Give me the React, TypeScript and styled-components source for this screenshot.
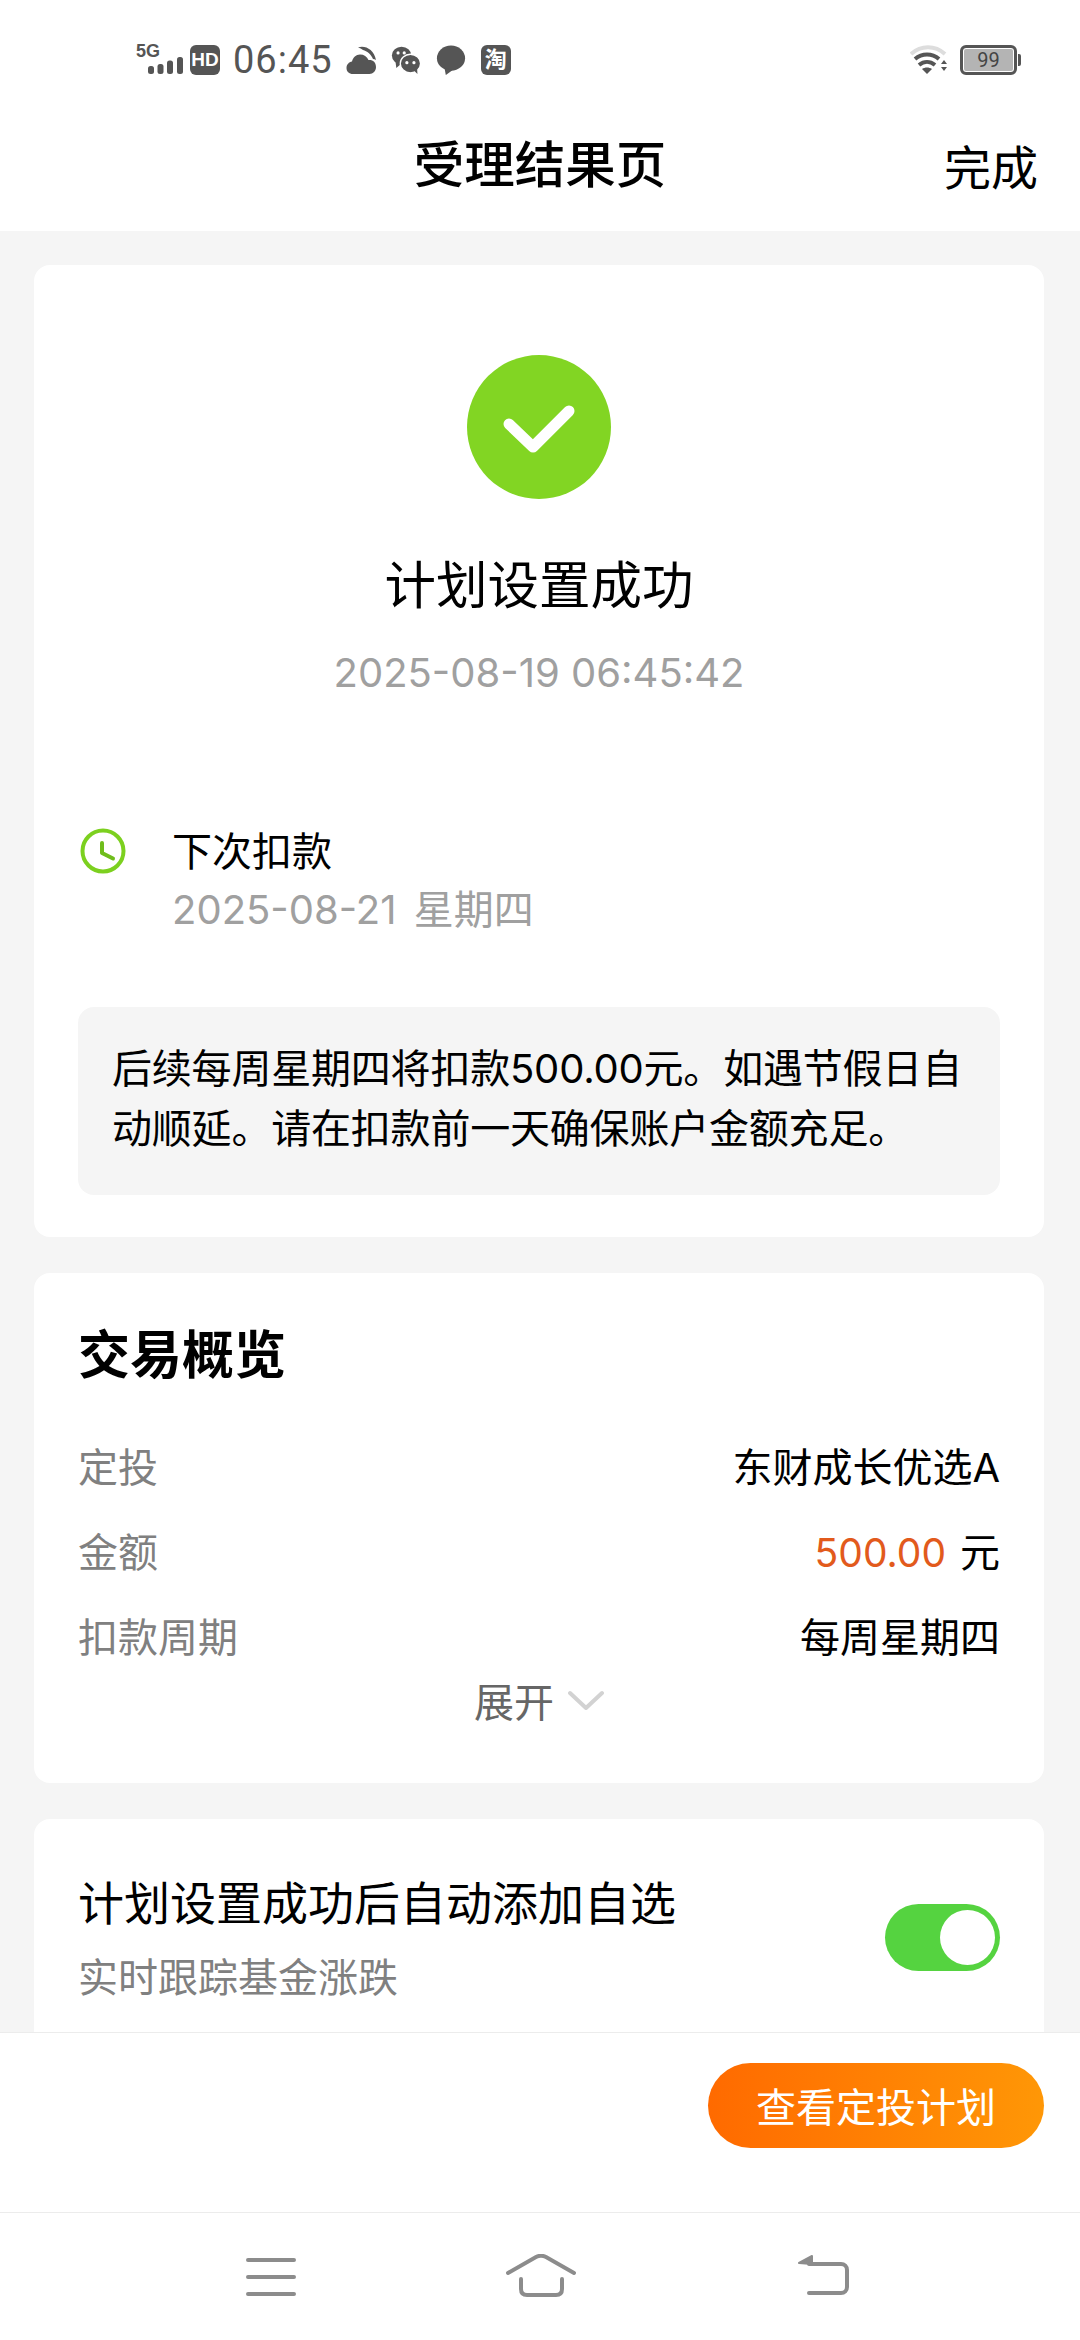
import styled, { createGlobalStyle } from 'styled-components';

const GlobalStyle = createGlobalStyle`
  html, body {
    margin: 0;
    padding: 0;
    background: #fff;
    font-family: Inter, "Noto Sans CJK SC", sans-serif;
  }
  * { box-sizing: border-box; }
`;

const Page = styled.div`
  width: 1080px;
  height: 2340px;
  display: flex;
  flex-direction: column;
  overflow: hidden;
  background: #f5f5f5;
`;

const StatusBar = styled.div`
  height: 102px;
  flex: none;
  background: #fff;
  padding: 45px 0 0 136px;
  display: flex;
  align-items: flex-start;
  color: #555;
`;

const StatusIcon = styled.svg<{ $gap?: number }>`
  display: block;
  flex: none;
  margin-right: ${(p) => p.$gap ?? 0}px;
`;

const SignalWrap = styled.div`
  width: 48px;
  height: 30px;
  position: relative;
  margin-right: 6px;
`;

const FiveG = styled.span`
  position: absolute;
  left: 0;
  top: -3px;
  font: 700 18px/18px "Liberation Sans", sans-serif;
  color: #555;
`;

const Glyph = styled.span<{ $size: number }>`
  width: 30px;
  height: 30px;
  border-radius: 6px;
  background: #555;
  color: #fff;
  display: flex;
  align-items: center;
  justify-content: center;
  font: 700 ${(p) => p.$size}px/30px "Liberation Sans", "Noto Sans CJK SC", sans-serif;
  flex: none;
`;

const Clock = styled.span`
  font: 400 38px/30px Roboto, sans-serif;
  letter-spacing: 1px;
  margin: 0 13px 0 13px;
  color: #555;
`;

const StatusRight = styled.div`
  margin-left: auto;
  margin-right: 63px;
  display: flex;
  align-items: center;
  gap: 12px;
`;

const Battery = styled.div`
  width: 57px;
  height: 30px;
  border: 3px solid #555;
  border-radius: 6px;
  background: #b4b4b4;
  box-shadow: inset 0 0 0 1px #fff;
  font: 400 20px/24px Roboto, sans-serif;
  color: #444;
  text-align: center;
  position: relative;
  &::after {
    content: '';
    position: absolute;
    right: -7px;
    top: 6px;
    width: 3px;
    height: 12px;
    background: #555;
    border-radius: 0 2px 2px 0;
  }
`;

const Header = styled.header`
  height: 129px;
  flex: none;
  background: #fff;
  position: relative;
  display: flex;
  align-items: center;
  justify-content: center;
  padding-bottom: 12px;
`;

const Title = styled.h1`
  margin: 0;
  font: 500 50.5px/64px "Noto Sans CJK SC", sans-serif;
  color: #000;
`;

const Done = styled.span`
  position: absolute;
  right: 42px;
  top: 31px;
  font: 400 47px/64px "Noto Sans CJK SC", sans-serif;
  color: #000;
`;

const Scroll = styled.main`
  flex: 1;
  min-height: 0;
  overflow: hidden;
  padding: 34px 36px 0 34px;
  display: flex;
  flex-direction: column;
  gap: 36px;
`;

const Card = styled.section`
  flex: none;
  background: #fff;
  border-radius: 16px;
`;

const ResultCard = styled(Card)`
  height: 972px;
  padding: 90px 44px 0;
`;

const Success = styled.div`
  display: flex;
  flex-direction: column;
  align-items: center;
`;

const ResultTitle = styled.h2`
  margin: 50px 0 0;
  font: 400 51.5px/66px "Noto Sans CJK SC", sans-serif;
  color: #000;
`;

const ResultTime = styled.div`
  margin-top: 32px;
  font: 400 40px/52px Inter, sans-serif;
  color: #a0a0a0;
`;

const NextRow = styled.div`
  margin-top: 122px;
  display: flex;
  align-items: flex-start;
  gap: 46px;
`;

const ClockIcon = styled.svg`
  flex: none;
  margin: 7px 0 0 2px;
`;

const NextTitle = styled.div`
  font: 400 40px/56px "Noto Sans CJK SC", sans-serif;
  color: #000;
`;

const NextDate = styled.div`
  margin-top: 5px;
  font: 400 40px/56px Inter, "Noto Sans CJK SC", sans-serif;
  word-spacing: 6px;
  color: #a0a0a0;
`;

const Notice = styled.div`
  margin-top: 69px;
  height: 188px;
  border-radius: 16px;
  background: #f5f5f5;
  padding: 32px 30px 0 34px;
  font: 400 40px/60px Inter, "Noto Sans CJK SC", sans-serif;
  letter-spacing: -0.2px;
  color: #000;
`;

const SummaryCard = styled(Card)`
  height: 510px;
  padding: 46px 44px 0;
`;

const SectionTitle = styled.h3`
  margin: 0 0 40px;
  font: 700 52px/66px "Noto Sans CJK SC", sans-serif;
  color: #000;
`;

const InfoRow = styled.div`
  height: 85px;
  display: flex;
  align-items: center;
  justify-content: space-between;
  font: 400 40px/56px Inter, "Noto Sans CJK SC", sans-serif;
  color: #000;
`;

const InfoLabel = styled.span`
  color: #808080;
`;

const Amount = styled.span`
  color: #e25a1c;
  font-size: 39px;
  margin-right: 14px;
`;

const Expand = styled.div`
  margin-top: -8px;
  display: flex;
  align-items: center;
  justify-content: center;
  gap: 14px;
  font: 400 40px/56px "Noto Sans CJK SC", sans-serif;
  color: #666;
`;

const AutoCard = styled(Card)`
  height: 260px;
  padding: 49px 44px 0;
  display: flex;
  align-items: flex-start;
  justify-content: space-between;
`;

const AutoTitle = styled.div`
  font: 400 46px/64px "Noto Sans CJK SC", sans-serif;
  color: #000;
`;

const AutoSub = styled.div`
  margin-top: 13px;
  font: 400 40px/60px "Noto Sans CJK SC", sans-serif;
  color: #808080;
`;

const Toggle = styled.div`
  width: 115px;
  height: 67px;
  margin-top: 36px;
  border-radius: 34px;
  background: #55d340;
  position: relative;
  &::after {
    content: '';
    position: absolute;
    right: 5px;
    top: 6px;
    width: 55px;
    height: 55px;
    border-radius: 50%;
    background: #fff;
  }
`;

const ActionBar = styled.div`
  height: 181px;
  flex: none;
  background: #fff;
  border-top: 1px solid #ececec;
  border-bottom: 1px solid #ececec;
  padding: 30px 36px 0 0;
  display: flex;
  justify-content: flex-end;
  align-items: flex-start;
`;

const PlanButton = styled.button`
  width: 336px;
  height: 85px;
  border: none;
  border-radius: 43px;
  background: linear-gradient(90deg, #ff6a00, #ff9706);
  color: #fff;
  font: 400 40px/85px "Noto Sans CJK SC", sans-serif;
  padding: 0;
`;

const NavBar = styled.nav`
  height: 127px;
  flex: none;
  background: #fff;
  display: flex;
  align-items: flex-start;
  padding: 45px 0 0 246px;
`;

const NavIcon = styled.svg`
  flex: none;
  display: block;
`;

const HomeIcon = styled(NavIcon)`
  margin: -4px 0 0 209px;
`;

const BackIcon = styled(NavIcon)`
  margin: -4px 0 0 220px;
`;

export default function App() {
  return (
    <>
      <GlobalStyle />
      <Page>
        <StatusBar>
          <SignalWrap>
            <FiveG>5G</FiveG>
            <StatusIcon width="48" height="30" viewBox="0 0 48 30">
              <g fill="#555">
                <rect x="12" y="21" width="6" height="8" rx="2.5" />
                <rect x="21.5" y="19" width="6" height="10" rx="2.5" />
                <rect x="31" y="15.5" width="6" height="13.5" rx="2.5" />
                <rect x="41" y="12" width="6" height="17" rx="2.5" />
              </g>
            </StatusIcon>
          </SignalWrap>
          <Glyph $size={19}>HD</Glyph>
          <Clock>06:45</Clock>
          <StatusIcon $gap={15} width="30" height="30" viewBox="0 0 30 30">
            <path fill="#555" d="M7 29c-4 0-6.5-2.5-6.5-6 0-3.5 2.5-6 5.5-6.5 1-4 4-7 8-7 4 0 7 2 8.5 5.5 4-.5 7.5 2 7.5 7 0 4-3 7-6.5 7z" />
            <path fill="#555" d="M12 2.5c7-2.5 16 2 18 12.5-1-.5-2-1-3-1-2-5-6-8-10-9-1.5-1-3-2-5-2.5z" />
          </StatusIcon>
          <StatusIcon $gap={15} width="30" height="30" viewBox="0 0 34 34">
            <ellipse cx="12" cy="12" rx="11" ry="10" fill="#555" />
            <path fill="#555" d="M5 18l1 8 6-5z" />
            <circle cx="8" cy="9" r="1.8" fill="#fff" />
            <circle cx="15" cy="9" r="1.8" fill="#fff" />
            <ellipse cx="22" cy="21" rx="11.5" ry="10.5" fill="#555" stroke="#fff" strokeWidth="1.5" />
            <path fill="#555" d="M26 29l4 4-.5-7z" />
            <circle cx="18" cy="20" r="1.8" fill="#fff" />
            <circle cx="26" cy="20" r="1.8" fill="#fff" />
          </StatusIcon>
          <StatusIcon $gap={15} width="30" height="30" viewBox="0 0 32 32">
            <ellipse cx="16" cy="14" rx="15" ry="13.5" fill="#555" />
            <path fill="#555" d="M9 24l1.5 8 7-5z" />
          </StatusIcon>
          <Glyph $size={22}>淘</Glyph>
          <StatusRight>
            <StatusIcon width="38" height="30" viewBox="0 0 38 30">
              <path fill="none" stroke="#ddd" strokeWidth="4" d="M1 9c10-9 24-9 34 0" />
              <path fill="none" stroke="#555" strokeWidth="4" d="M5 14c7-6 17-6 24 0" />
              <path fill="none" stroke="#555" strokeWidth="4" d="M9 20c5-4 11-4 16 0" />
              <path fill="#555" d="M12 24c3-2 7-2 10 0l-5 5z" />
              <path fill="#555" d="M31 19l3-4 3 4zM31 22h6l-3 4z" />
            </StatusIcon>
            <Battery>99</Battery>
          </StatusRight>
        </StatusBar>

        <Header>
          <Title>受理结果页</Title>
          <Done>完成</Done>
        </Header>

        <Scroll>
          <ResultCard>
            <Success>
              <svg width="144" height="144" viewBox="0 0 144 144">
                <circle cx="72" cy="72" r="72" fill="#82d523" />
                <path d="M42 69l24 23 36-36" fill="none" stroke="#fff" strokeWidth="11" strokeLinecap="round" strokeLinejoin="round" />
              </svg>
              <ResultTitle>计划设置成功</ResultTitle>
              <ResultTime>2025-08-19 06:45:42</ResultTime>
            </Success>
            <NextRow>
              <ClockIcon width="46" height="46" viewBox="0 0 46 46">
                <circle cx="23" cy="23" r="20.5" fill="none" stroke="#7cd01f" strokeWidth="4" />
                <path d="M22 15v10l11 5.5" fill="none" stroke="#6fbd1c" strokeWidth="4" strokeLinecap="round" strokeLinejoin="round" />
              </ClockIcon>
              <div>
                <NextTitle>下次扣款</NextTitle>
                <NextDate>2025-08-21 星期四</NextDate>
              </div>
            </NextRow>
            <Notice>后续每周星期四将扣款500.00元。如遇节假日自动顺延。请在扣款前一天确保账户金额充足。</Notice>
          </ResultCard>

          <SummaryCard>
            <SectionTitle>交易概览</SectionTitle>
            <InfoRow>
              <InfoLabel>定投</InfoLabel>
              <span>东财成长优选A</span>
            </InfoRow>
            <InfoRow>
              <InfoLabel>金额</InfoLabel>
              <span>
                <Amount>500.00</Amount>元
              </span>
            </InfoRow>
            <InfoRow>
              <InfoLabel>扣款周期</InfoLabel>
              <span>每周星期四</span>
            </InfoRow>
            <Expand>
              展开
              <svg width="36" height="20" viewBox="0 0 36 20">
                <path d="M2 3l16 15L34 3" fill="none" stroke="#d2d2d2" strokeWidth="4" strokeLinecap="round" strokeLinejoin="round" />
              </svg>
            </Expand>
          </SummaryCard>

          <AutoCard>
            <div>
              <AutoTitle>计划设置成功后自动添加自选</AutoTitle>
              <AutoSub>实时跟踪基金涨跌</AutoSub>
            </div>
            <Toggle />
          </AutoCard>
        </Scroll>

        <ActionBar>
          <PlanButton>查看定投计划</PlanButton>
        </ActionBar>

        <NavBar>
          <NavIcon width="50" height="40" viewBox="0 0 50 40">
            <path d="M2 2h46M2 19h46M2 36h46" fill="none" stroke="#8c8c8c" strokeWidth="4" strokeLinecap="round" />
          </NavIcon>
          <HomeIcon width="72" height="44" viewBox="0 0 72 44">
            <path d="M3 19L31 3c3-1.5 7-1.5 10 0l28 16" fill="none" stroke="#8c8c8c" strokeWidth="4" strokeLinecap="round" />
            <path d="M16 25v10c0 4 2 6 6 6h29c4 0 6-2 6-6V25" fill="none" stroke="#8c8c8c" strokeWidth="4" strokeLinecap="round" />
          </HomeIcon>
          <BackIcon width="54" height="42" viewBox="0 0 54 42">
            <path d="M2 9L15 2v8z" fill="#8c8c8c" stroke="#8c8c8c" strokeWidth="2" strokeLinejoin="round" />
            <path d="M12 10h32c3.5 0 6 2.5 6 6v17c0 3.5-2.5 6-6 6H12" fill="none" stroke="#8c8c8c" strokeWidth="4" strokeLinecap="round" />
          </BackIcon>
        </NavBar>
      </Page>
    </>
  );
}
